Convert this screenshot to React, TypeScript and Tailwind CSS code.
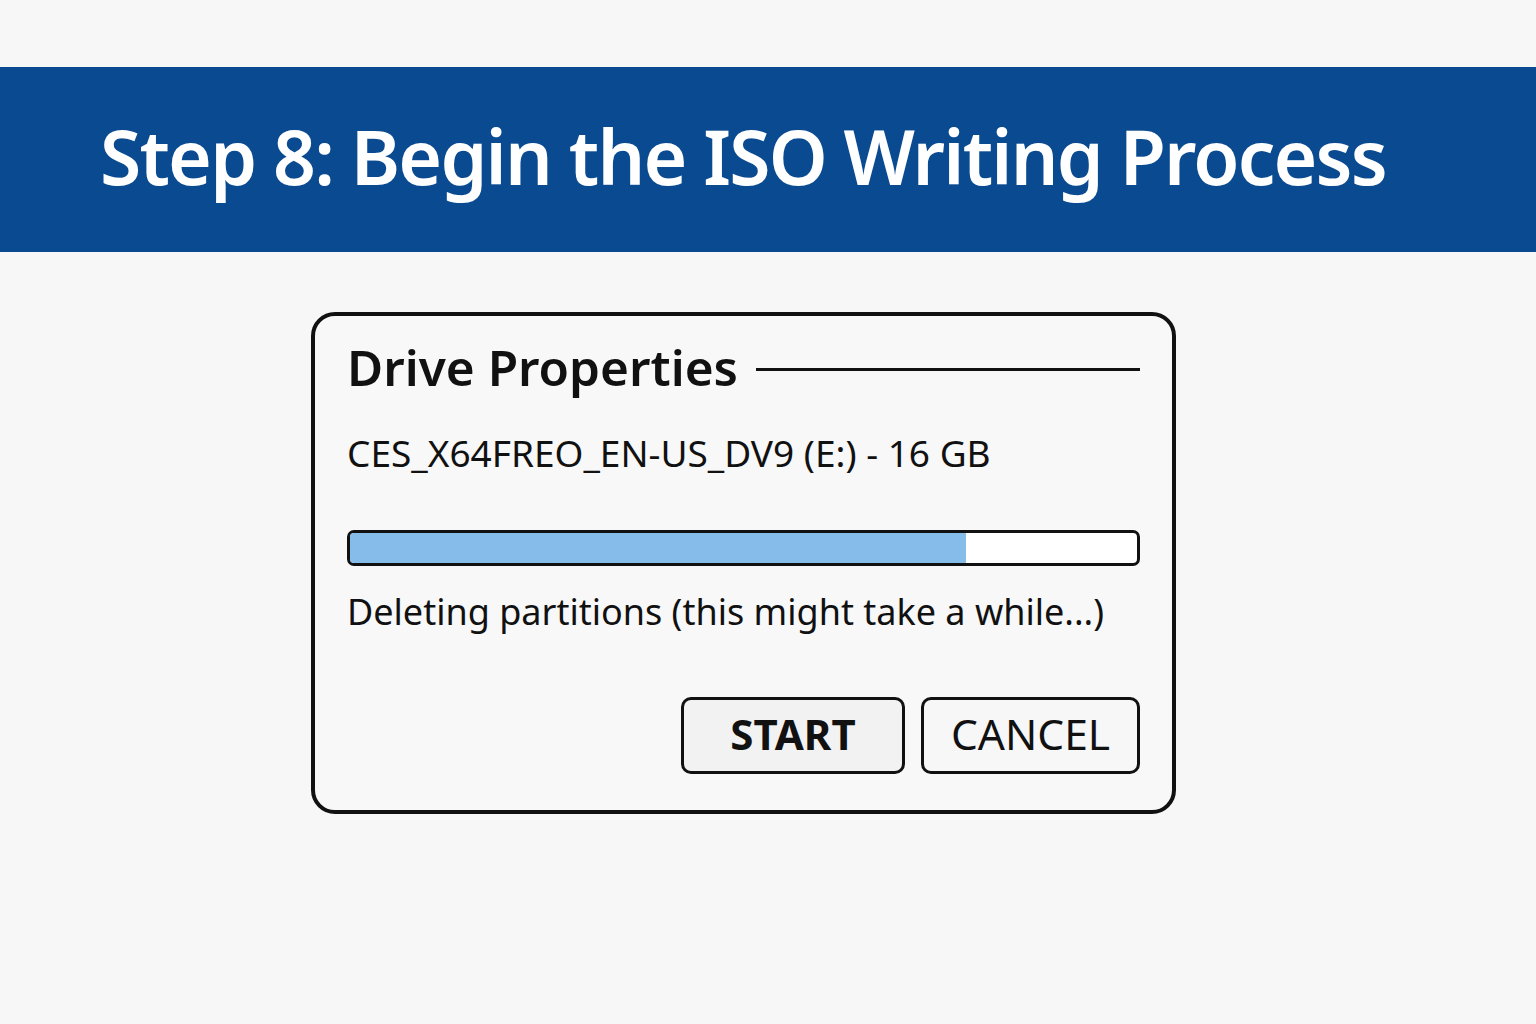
import React from "react";

export default function App() {
  const font = { fontFamily: '"Noto Sans", "Open Sans", sans-serif' };
  return (
    <div className="w-[1536px] h-[1024px] bg-[#f7f7f7] flex flex-col" style={font}>
      <div className="h-[67px]" />
      <div className="h-[185px] bg-[#094a91] flex items-center pl-[100px]">
        <h1 className="text-[75px] font-semibold text-white leading-none tracking-[-1.8px] -mt-[6px]">
          Step 8: Begin the ISO Writing Process
        </h1>
      </div>
      <div className="flex pt-[60px] pl-[311px]">
        <div className="w-[865px] h-[502px] border-[4px] border-[#111] rounded-[24px] bg-[#f8f8f8] pl-[32px] pr-[32px] pt-[27px] flex flex-col">
          <div className="flex items-center">
            <span className="text-[49.5px] font-semibold text-[#111] leading-none">Drive Properties</span>
            <div className="flex-1 h-[3px] bg-[#111] ml-[18px] mt-[4px]" />
          </div>
          <div className="mt-[41px] text-[37px] text-[#111] leading-none">
            CES_X64FREO_EN-US_DV9 (E:) - 16 GB
          </div>
          <div className="mt-[59px] h-[36px] border-[3px] border-[#111] rounded-[7px] bg-white overflow-hidden">
            <div className="h-full bg-[#86bce9]" style={{ width: "78.3%" }} />
          </div>
          <div className="mt-[28px] text-[36px] text-[#111] leading-none">
            Deleting partitions (this might take a while...)
          </div>
          <div className="flex justify-end gap-[16px] mt-[67px]">
            <button className="w-[224px] h-[77px] border-[3px] border-[#111] rounded-[10px] bg-[#f2f2f2] text-[42px] font-bold text-[#111] leading-none pb-[2px]">
              START
            </button>
            <button className="w-[219px] h-[77px] border-[3px] border-[#111] rounded-[10px] bg-[#f7f7f7] text-[42.5px] text-[#111] leading-none pb-[2px]">
              CANCEL
            </button>
          </div>
        </div>
      </div>
    </div>
  );
}
